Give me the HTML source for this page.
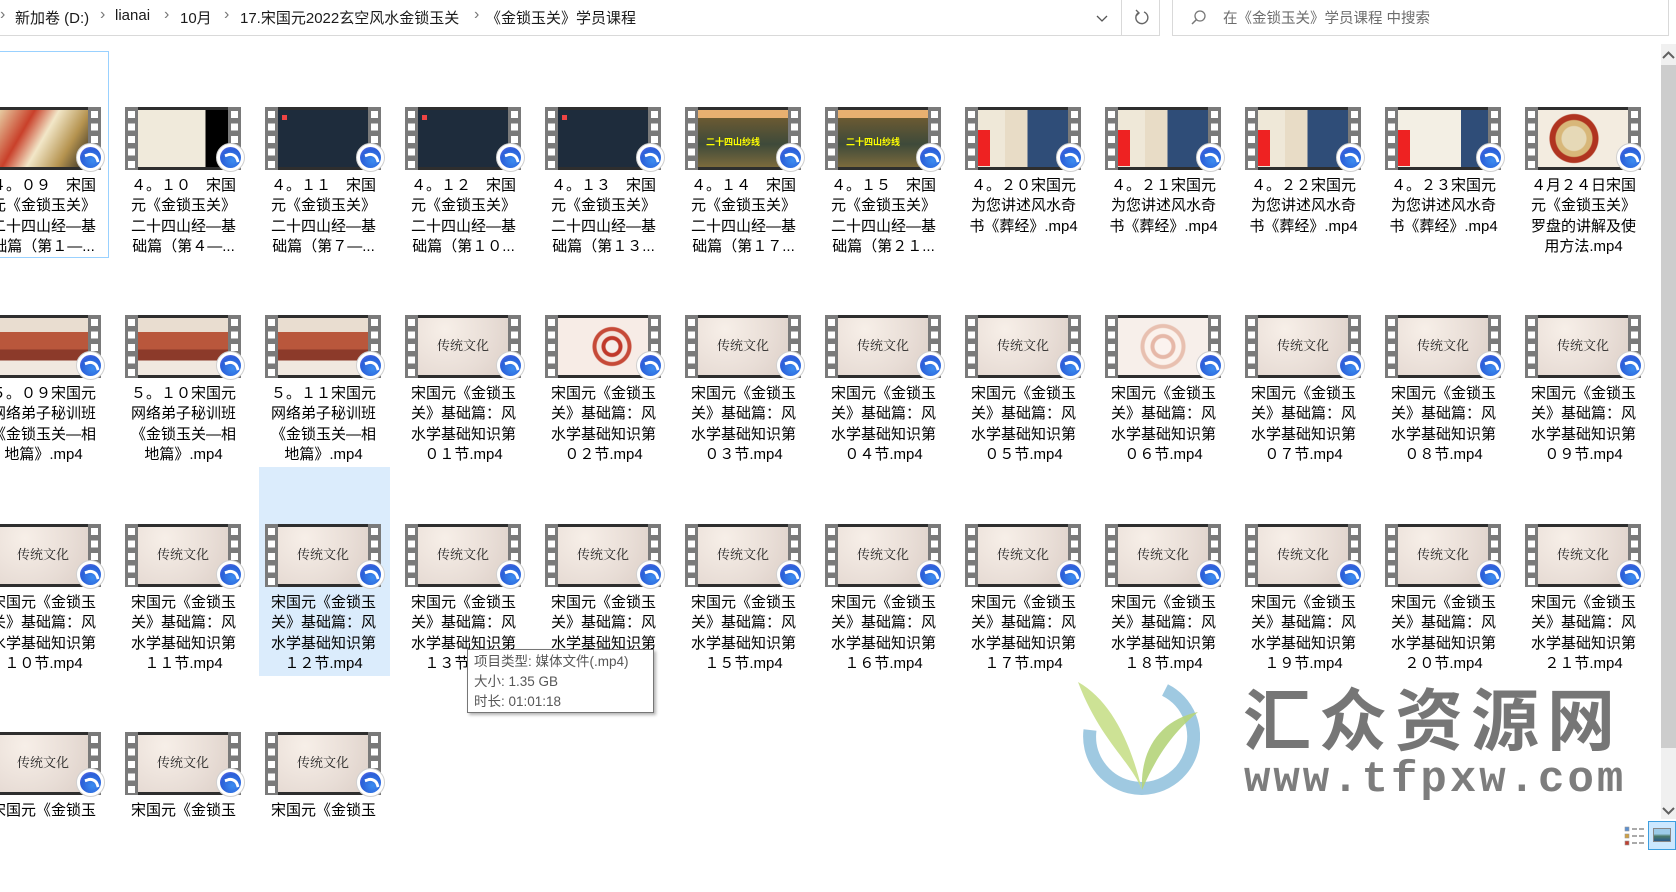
<!DOCTYPE html>
<html><head><meta charset="utf-8"><style>
*{margin:0;padding:0;box-sizing:border-box}
body{width:1676px;height:852px;overflow:hidden;background:#fff;position:relative;font-family:"Liberation Sans","Noto Sans CJK SC",sans-serif;color:#000}
.bc{position:absolute;top:7px;font-size:15px;color:#1a1a1a;white-space:nowrap}
.chev{position:absolute;top:6px;font-size:16px;color:#777}
.it{position:absolute;width:131px;height:160px}
.film{position:absolute;left:7px;top:0;width:116px;height:63px;background:#2e2e2e}
.film:before,.film:after{content:"";position:absolute;top:0;width:13px;height:63px;background:#7a7a7a repeating-linear-gradient(to bottom,transparent 0 4px,#fff 4px 11px,transparent 11px 12.5px) no-repeat 3px 0/7px 63px}
.film:before{left:0}.film:after{right:0}
.c{position:absolute;left:13px;right:13px;top:3px;bottom:3px;overflow:hidden}
.ic{position:absolute;left:91px;top:36px;width:29px;height:29px;border-radius:50%;background:#fff;border:1px solid #d0d0d0;z-index:2}
.ic:before{content:"";position:absolute;left:3px;top:3px;width:21px;height:21px;border-radius:50%;background:radial-gradient(circle at 60% 65%,#3b8cf0,#2a5fd8 60%,#7a6cf0)}
.ic:after{content:"";position:absolute;left:9px;top:8px;width:9px;height:9px;border:3px solid #fff;border-left:none;border-bottom:none;border-radius:0 9px 0 0;transform:rotate(-20deg)}
.it p{position:absolute;left:0;top:69px;width:131px;text-align:center;font-size:15px;line-height:20.3px;white-space:nowrap;font-family:"Liberation Sans","Noto Sans CJK SC",sans-serif}
.ta{background:linear-gradient(120deg,#e8d3a8,#c9402a 30%,#f2e7c8 50%,#b5934f 75%,#2d2a22)}
.tb{background:linear-gradient(90deg,#f0eadb 75%,#000 75%)}
.tn{background:#1e2c3c}
.tn:before{content:"";position:absolute;left:4px;top:5px;width:5px;height:5px;background:#e44}
.tm{background:linear-gradient(180deg,#e8b070 0 14%,#6b5a32 14%,#3e4a3a 60%,#7c6a3c)}
.tm:after{content:"二十四山纱线";position:absolute;left:8px;top:25px;font-size:9px;color:#ff0;font-weight:bold}
.tk{background:linear-gradient(90deg,#efe8d8 0 30%,#e8dcc6 30% 55%,#2f4d78 55%)}
.tk:before{content:"";position:absolute;left:0;top:20px;width:12px;height:36px;background:#e22}
.tc{background:radial-gradient(circle at 40% 50%,#e6d9b7 0 12px,#d8b779 13px 18px,#b03420 19px 24px,#f3ece0 25px)}
.tt{background:linear-gradient(180deg,#e9ddd0 0 25%,#b9573c 25% 55%,#8c3a2a 55% 75%,#f0e8e0 75%)}
.tw{background:radial-gradient(circle at 30% 20%,#f7efe8,#e8ddd6 60%,#dccfc7)}
.tw:after{content:"传统文化";position:absolute;left:0;right:0;top:17px;text-align:center;font-size:13px;color:#222;font-family:"Noto Serif CJK SC",serif}
.tg{background:radial-gradient(circle at 60% 50%,#f6eeea 0 6px,#c0392b 7px 10px,#f4e7e0 11px 15px,#c64a38 16px 19px,#f7ece6 20px)}
.tg2{background:radial-gradient(circle at 50% 50%,#fbf3ef 0 8px,#e6b8a8 9px 12px,#fbf2ec 13px 18px,#e8c0b0 19px 22px,#f7efea 23px)}
</style></head><body>
<!-- address bar -->
<div style="position:absolute;left:0;top:0;width:1160px;height:36px;border-bottom:1px solid #d9d9d9;border-right:1px solid #d9d9d9"></div>
<div style="position:absolute;left:1121px;top:0;width:1px;height:36px;background:#d9d9d9"></div>
<div style="position:absolute;left:1172px;top:0;width:497px;height:36px;border:1px solid #d9d9d9;border-top:none"></div>
<span class="chev" style="left:0">›</span>
<span class="bc" style="left:15px">新加卷 (D:)</span>
<span class="chev" style="left:100px">›</span>
<span class="bc" style="left:115px">lianai</span>
<span class="chev" style="left:164px">›</span>
<span class="bc" style="left:180px">10月</span>
<span class="chev" style="left:224px">›</span>
<span class="bc" style="left:240px">17.宋国元2022玄空风水金锁玉关</span>
<span class="chev" style="left:474px">›</span>
<span class="bc" style="left:486px">《金锁玉关》学员课程</span>
<svg style="position:absolute;left:1096px;top:13px" width="12" height="10"><path d="M1 3 L6 8 L11 3" stroke="#555" stroke-width="1.3" fill="none"/></svg>
<svg style="position:absolute;left:1133px;top:9px" width="18" height="18"><path d="M5 4 A6 6 0 1 0 11 3" stroke="#666" stroke-width="1.4" fill="none"/><path d="M3 1 L6 4 L3 7" stroke="#666" stroke-width="1.4" fill="none"/></svg>
<svg style="position:absolute;left:1190px;top:9px" width="18" height="18"><circle cx="10" cy="7" r="5" stroke="#777" stroke-width="1.3" fill="none"/><path d="M6.5 10.5 L2 15" stroke="#777" stroke-width="1.5"/></svg>
<span style="position:absolute;left:1223px;top:7px;font-size:14.5px;color:#6d6d6d">在《金锁玉关》学员课程 中搜索</span>

<!-- scrollbar -->
<div style="position:absolute;left:1661px;top:44px;width:15px;height:775px;background:#f0f0f0"></div>
<div style="position:absolute;left:1661px;top:65px;width:15px;height:683px;background:#cdcdcd"></div>
<svg style="position:absolute;left:1662px;top:50px" width="13" height="10"><path d="M1 8 L6.5 2.5 L12 8" stroke="#606060" stroke-width="2" fill="none"/></svg>
<svg style="position:absolute;left:1662px;top:806px" width="13" height="10"><path d="M1 2 L6.5 7.5 L12 2" stroke="#606060" stroke-width="2" fill="none"/></svg>

<!-- selection / focus -->
<div style="position:absolute;left:-10px;top:51px;width:119px;height:207px;border:1px solid #99d1ff"></div>
<div style="position:absolute;left:259px;top:467px;width:131px;height:209px;background:#dbecfc"></div>

<!-- row 1 -->
<div class="it" style="left:-22px;top:107px"><div class="film"><div class="c ta"></div><b class="ic"></b></div><p>４。０９　宋国<br>元《金锁玉关》<br>二十四山经—基<br>础篇（第１—...</p></div>
<div class="it" style="left:118px;top:107px"><div class="film"><div class="c tb"></div><b class="ic"></b></div><p>４。１０　宋国<br>元《金锁玉关》<br>二十四山经—基<br>础篇（第４—...</p></div>
<div class="it" style="left:258px;top:107px"><div class="film"><div class="c tn"></div><b class="ic"></b></div><p>４。１１　宋国<br>元《金锁玉关》<br>二十四山经—基<br>础篇（第７—...</p></div>
<div class="it" style="left:398px;top:107px"><div class="film"><div class="c tn"></div><b class="ic"></b></div><p>４。１２　宋国<br>元《金锁玉关》<br>二十四山经—基<br>础篇（第１０...</p></div>
<div class="it" style="left:538px;top:107px"><div class="film"><div class="c tn"></div><b class="ic"></b></div><p>４。１３　宋国<br>元《金锁玉关》<br>二十四山经—基<br>础篇（第１３...</p></div>
<div class="it" style="left:678px;top:107px"><div class="film"><div class="c tm"></div><b class="ic"></b></div><p>４。１４　宋国<br>元《金锁玉关》<br>二十四山经—基<br>础篇（第１７...</p></div>
<div class="it" style="left:818px;top:107px"><div class="film"><div class="c tm"></div><b class="ic"></b></div><p>４。１５　宋国<br>元《金锁玉关》<br>二十四山经—基<br>础篇（第２１...</p></div>
<div class="it" style="left:958px;top:107px"><div class="film"><div class="c tk"></div><b class="ic"></b></div><p>４。２０宋国元<br>为您讲述风水奇<br>书《葬经》.mp4</p></div>
<div class="it" style="left:1098px;top:107px"><div class="film"><div class="c tk"></div><b class="ic"></b></div><p>４。２１宋国元<br>为您讲述风水奇<br>书《葬经》.mp4</p></div>
<div class="it" style="left:1238px;top:107px"><div class="film"><div class="c tk"></div><b class="ic"></b></div><p>４。２２宋国元<br>为您讲述风水奇<br>书《葬经》.mp4</p></div>
<div class="it" style="left:1378px;top:107px"><div class="film"><div class="c tk" style="background:linear-gradient(90deg,#f3efe4 70%,#2f4d78 70%)"></div><b class="ic"></b></div><p>４。２３宋国元<br>为您讲述风水奇<br>书《葬经》.mp4</p></div>
<div class="it" style="left:1518px;top:107px"><div class="film"><div class="c tc"></div><b class="ic"></b></div><p>４月２４日宋国<br>元《金锁玉关》<br>罗盘的讲解及使<br>用方法.mp4</p></div>

<!-- row 2 -->
<div class="it" style="left:-22px;top:315px"><div class="film"><div class="c tt"></div><b class="ic"></b></div><p>５。０９宋国元<br>网络弟子秘训班<br>《金锁玉关—相<br>地篇》.mp4</p></div>
<div class="it" style="left:118px;top:315px"><div class="film"><div class="c tt"></div><b class="ic"></b></div><p>５。１０宋国元<br>网络弟子秘训班<br>《金锁玉关—相<br>地篇》.mp4</p></div>
<div class="it" style="left:258px;top:315px"><div class="film"><div class="c tt"></div><b class="ic"></b></div><p>５。１１宋国元<br>网络弟子秘训班<br>《金锁玉关—相<br>地篇》.mp4</p></div>
<div class="it" style="left:398px;top:315px"><div class="film"><div class="c tw"></div><b class="ic"></b></div><p>宋国元《金锁玉<br>关》基础篇：风<br>水学基础知识第<br>０１节.mp4</p></div>
<div class="it" style="left:538px;top:315px"><div class="film"><div class="c tg"></div><b class="ic"></b></div><p>宋国元《金锁玉<br>关》基础篇：风<br>水学基础知识第<br>０２节.mp4</p></div>
<div class="it" style="left:678px;top:315px"><div class="film"><div class="c tw"></div><b class="ic"></b></div><p>宋国元《金锁玉<br>关》基础篇：风<br>水学基础知识第<br>０３节.mp4</p></div>
<div class="it" style="left:818px;top:315px"><div class="film"><div class="c tw"></div><b class="ic"></b></div><p>宋国元《金锁玉<br>关》基础篇：风<br>水学基础知识第<br>０４节.mp4</p></div>
<div class="it" style="left:958px;top:315px"><div class="film"><div class="c tw"></div><b class="ic"></b></div><p>宋国元《金锁玉<br>关》基础篇：风<br>水学基础知识第<br>０５节.mp4</p></div>
<div class="it" style="left:1098px;top:315px"><div class="film"><div class="c tg2"></div><b class="ic"></b></div><p>宋国元《金锁玉<br>关》基础篇：风<br>水学基础知识第<br>０６节.mp4</p></div>
<div class="it" style="left:1238px;top:315px"><div class="film"><div class="c tw"></div><b class="ic"></b></div><p>宋国元《金锁玉<br>关》基础篇：风<br>水学基础知识第<br>０７节.mp4</p></div>
<div class="it" style="left:1378px;top:315px"><div class="film"><div class="c tw"></div><b class="ic"></b></div><p>宋国元《金锁玉<br>关》基础篇：风<br>水学基础知识第<br>０８节.mp4</p></div>
<div class="it" style="left:1518px;top:315px"><div class="film"><div class="c tw"></div><b class="ic"></b></div><p>宋国元《金锁玉<br>关》基础篇：风<br>水学基础知识第<br>０９节.mp4</p></div>

<!-- row 3 -->
<div class="it" style="left:-22px;top:524px"><div class="film"><div class="c tw"></div><b class="ic"></b></div><p>宋国元《金锁玉<br>关》基础篇：风<br>水学基础知识第<br>１０节.mp4</p></div>
<div class="it" style="left:118px;top:524px"><div class="film"><div class="c tw"></div><b class="ic"></b></div><p>宋国元《金锁玉<br>关》基础篇：风<br>水学基础知识第<br>１１节.mp4</p></div>
<div class="it" style="left:258px;top:524px"><div class="film"><div class="c tw"></div><b class="ic"></b></div><p>宋国元《金锁玉<br>关》基础篇：风<br>水学基础知识第<br>１２节.mp4</p></div>
<div class="it" style="left:398px;top:524px"><div class="film"><div class="c tw"></div><b class="ic"></b></div><p>宋国元《金锁玉<br>关》基础篇：风<br>水学基础知识第<br>１３节.mp4</p></div>
<div class="it" style="left:538px;top:524px"><div class="film"><div class="c tw"></div><b class="ic"></b></div><p>宋国元《金锁玉<br>关》基础篇：风<br>水学基础知识第<br>１４节.mp4</p></div>
<div class="it" style="left:678px;top:524px"><div class="film"><div class="c tw"></div><b class="ic"></b></div><p>宋国元《金锁玉<br>关》基础篇：风<br>水学基础知识第<br>１５节.mp4</p></div>
<div class="it" style="left:818px;top:524px"><div class="film"><div class="c tw"></div><b class="ic"></b></div><p>宋国元《金锁玉<br>关》基础篇：风<br>水学基础知识第<br>１６节.mp4</p></div>
<div class="it" style="left:958px;top:524px"><div class="film"><div class="c tw"></div><b class="ic"></b></div><p>宋国元《金锁玉<br>关》基础篇：风<br>水学基础知识第<br>１７节.mp4</p></div>
<div class="it" style="left:1098px;top:524px"><div class="film"><div class="c tw"></div><b class="ic"></b></div><p>宋国元《金锁玉<br>关》基础篇：风<br>水学基础知识第<br>１８节.mp4</p></div>
<div class="it" style="left:1238px;top:524px"><div class="film"><div class="c tw"></div><b class="ic"></b></div><p>宋国元《金锁玉<br>关》基础篇：风<br>水学基础知识第<br>１９节.mp4</p></div>
<div class="it" style="left:1378px;top:524px"><div class="film"><div class="c tw"></div><b class="ic"></b></div><p>宋国元《金锁玉<br>关》基础篇：风<br>水学基础知识第<br>２０节.mp4</p></div>
<div class="it" style="left:1518px;top:524px"><div class="film"><div class="c tw"></div><b class="ic"></b></div><p>宋国元《金锁玉<br>关》基础篇：风<br>水学基础知识第<br>２１节.mp4</p></div>

<!-- row 4 -->
<div class="it" style="left:-22px;top:732px"><div class="film"><div class="c tw"></div><b class="ic"></b></div><p>宋国元《金锁玉<br>关》基础篇：风</p></div>
<div class="it" style="left:118px;top:732px"><div class="film"><div class="c tw"></div><b class="ic"></b></div><p>宋国元《金锁玉<br>关》基础篇：风</p></div>
<div class="it" style="left:258px;top:732px"><div class="film"><div class="c tw"></div><b class="ic"></b></div><p>宋国元《金锁玉<br>关》基础篇：风</p></div>

<!-- watermark -->
<svg style="position:absolute;left:1070px;top:680px" width="130" height="125">
<path d="M20 50 A52 52 0 1 0 95 10" stroke="#8ec0dc" stroke-width="13" fill="none" opacity=".85"/>
<path d="M8 2 C40 20 60 60 72 110 C60 80 30 60 8 2Z" fill="#c8df8a" opacity=".9"/>
<path d="M72 110 C70 70 90 40 128 32 C100 55 85 80 72 110Z" fill="#b5d47a" opacity=".9"/>
</svg>
<div style="position:absolute;left:1243px;top:676px;font-size:68px;font-weight:bold;color:#767676;letter-spacing:8px;font-family:'Noto Sans CJK SC',sans-serif;line-height:80px;white-space:nowrap">汇众资源网</div>
<div style="position:absolute;left:1244px;top:756px;font-size:44px;font-weight:bold;color:#7d7d7d;letter-spacing:3px;font-family:'Liberation Mono',monospace;line-height:48px;white-space:nowrap">www.tfpxw.com</div>

<!-- tooltip -->
<div style="position:absolute;left:467px;top:649px;width:187px;height:64px;background:#fff;border:1px solid #767676;box-shadow:2px 2px 3px rgba(0,0,0,.3);font-size:13.5px;color:#575757;line-height:20px;padding:2px 0 0 6px;white-space:nowrap">项目类型: 媒体文件(.mp4)<br>大小: 1.35 GB<br>时长: 01:01:18</div>

<!-- status bar -->
<div style="position:absolute;left:0;top:818px;width:1661px;height:34px;background:#fff"></div>
<div style="position:absolute;left:1661px;top:819px;width:15px;height:33px;background:#fff"></div>
<svg style="position:absolute;left:1624px;top:826px" width="22" height="20"><rect x="1" y="1" width="4" height="4" fill="#5a8fd0" stroke="#999" stroke-width=".6"/><rect x="1" y="8" width="4" height="4" fill="#d0a040" stroke="#999" stroke-width=".6"/><rect x="1" y="15" width="4" height="4" fill="#c04030" stroke="#999" stroke-width=".6"/><path d="M8 3h5M15 3h5M8 10h5M15 10h5M8 17h5M15 17h5" stroke="#555"/></svg>
<div style="position:absolute;left:1648px;top:821px;width:28px;height:29px;background:#cce8ff;border:1px solid #3c9ee0"></div>
<div style="position:absolute;left:1653px;top:828px;width:18px;height:14px;border:1px solid #888;background:linear-gradient(180deg,#9ccbe8 40%,#4a7a6a 60%,#2a5a8a)"></div>
</body></html>
